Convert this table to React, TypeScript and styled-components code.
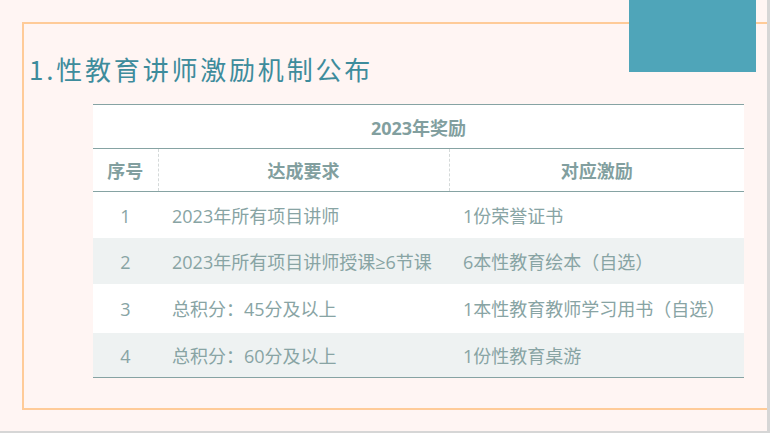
import React from "react";
import styled, { createGlobalStyle } from "styled-components";

const Global = createGlobalStyle`
  html, body { margin: 0; padding: 0; background: #d6d6d6; }
  body { width: 770px; height: 433px; overflow: hidden; }
`;

const Slide = styled.div`
  position: relative;
  width: 767px;
  height: 431px;
  background: #fff5f3;
  padding: 22px 0 0 22px;
  box-sizing: border-box;
  overflow: hidden;
  font-family: "Open Sans", "Noto Sans CJK SC", sans-serif;
`;

const Frame = styled.div`
  height: 388px;
  box-sizing: border-box;
  border: 2px solid #ffcb98;
  border-right: none;
  display: flex;
  flex-direction: column;
`;

const Corner = styled.div`
  position: absolute;
  top: 0;
  left: 629px;
  width: 127px;
  height: 72px;
  background: #4fa5b9;
`;

const Title = styled.h1`
  margin: 30px 0 0 5px;
  font-family: "Noto Sans CJK SC", sans-serif;
  font-weight: 400;
  font-size: 26px;
  line-height: 30px;
  letter-spacing: 2.8px;
  color: #3e8c9c;
`;

const Table = styled.table`
  margin: 20px 0 0 69px;
  width: 651px;
  border-collapse: collapse;
  background: #ffffff;
  table-layout: fixed;
  color: #88a4a4;
  font-size: 18px;
`;

const Col = styled.col<{ $w: number }>`
  width: ${(p) => p.$w}px;
`;

const CaptionCell = styled.th`
  height: 43px;
  padding: 0;
  border-top: 1px solid #86a3a3;
  border-bottom: 1px solid #86a3a3;
  font-weight: 700;
  font-size: 18px;
  color: #829f9f;
  text-align: center;
  vertical-align: middle;
`;

const HeadCell = styled.th<{ $last?: boolean }>`
  height: 42px;
  padding: 0;
  border-bottom: 1px solid #86a3a3;
  border-right: ${(p) => (p.$last ? "none" : "1px dashed #d4d9d9")};
  font-weight: 700;
  font-size: 18px;
  color: #829f9f;
  text-align: center;
  vertical-align: middle;
`;

const Row = styled.tr<{ $striped: boolean; $h: number; $end?: boolean }>`
  height: ${(p) => p.$h}px;
  background: ${(p) => (p.$striped ? "#eef2f2" : "#ffffff")};
  border-bottom: ${(p) => (p.$end ? "1.5px solid #86a3a3" : "none")};
`;

const Cell = styled.td<{ $center?: boolean }>`
  padding: 2px 0 0 ${(p) => (p.$center ? 0 : 14)}px;
  text-align: ${(p) => (p.$center ? "center" : "left")};
  vertical-align: middle;
  white-space: nowrap;
  line-height: 24px;
`;

const rows = [
  { n: "1", req: "2023年所有项目讲师", reward: "1份荣誉证书", h: 46 },
  { n: "2", req: "2023年所有项目讲师授课≥6节课", reward: "6本性教育绘本（自选）", h: 46 },
  { n: "3", req: "总积分：45分及以上", reward: "1本性教育教师学习用书（自选）", h: 49 },
  { n: "4", req: "总积分：60分及以上", reward: "1份性教育桌游", h: 45 },
];

export default function App() {
  return (
    <>
      <Global />
      <Slide>
        <Frame>
          <Title>1.性教育讲师激励机制公布</Title>
          <Table>
            <colgroup>
              <Col $w={65} />
              <Col $w={291} />
              <Col $w={295} />
            </colgroup>
            <thead>
              <tr>
                <CaptionCell colSpan={3}>2023年奖励</CaptionCell>
              </tr>
              <tr>
                <HeadCell>序号</HeadCell>
                <HeadCell>达成要求</HeadCell>
                <HeadCell $last>对应激励</HeadCell>
              </tr>
            </thead>
            <tbody>
              {rows.map((r, i) => (
                <Row key={r.n} $striped={i % 2 === 1} $h={r.h} $end={i === rows.length - 1}>
                  <Cell $center>{r.n}</Cell>
                  <Cell>{r.req}</Cell>
                  <Cell>{r.reward}</Cell>
                </Row>
              ))}
            </tbody>
          </Table>
        </Frame>
        <Corner />
      </Slide>
    </>
  );
}
